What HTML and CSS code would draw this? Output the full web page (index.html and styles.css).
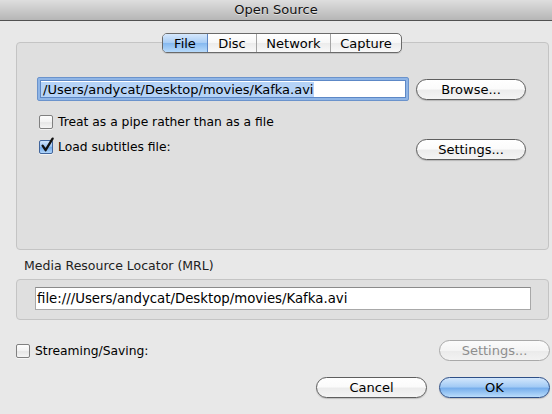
FILE: index.html
```html
<!DOCTYPE html>
<html>
<head>
<meta charset="utf-8">
<link rel="stylesheet" href="styles.css">
</head>
<body>
<div class="window">
  <div class="titlebar">Open Source</div>
  <div class="content">
    <div class="tabs">
      <span class="seg seg-file selected">File</span><span class="seg seg-disc">Disc</span><span class="seg seg-net">Network</span><span class="seg seg-cap">Capture</span>
    </div>
    <div class="tabbox">
      <div class="row row-path">
        <div class="field focused"><span class="selection">/Users/andycat/Desktop/movies/Kafka.avi</span></div>
        <div class="btn btn-browse">Browse...</div>
      </div>
      <div class="check check-pipe"><span class="cbox"></span><span>Treat as a pipe rather than as a file</span></div>
      <div class="row row-subs">
        <div class="check check-subs"><span class="cbox on"><svg class="tick" width="14" height="16" viewBox="0 0 14 16"><path d="M2.6 8.6 L5.6 13.2 L12.6 1.6" fill="none" stroke="#111" stroke-width="2.3" stroke-linecap="round" stroke-linejoin="round"/></svg></span><span>Load subtitles file:</span></div>
        <div class="btn btn-settings">Settings...</div>
      </div>
    </div>
    <div class="mrl-label">Media Resource Locator (MRL)</div>
    <div class="mrlbox">
      <div class="field plain">file:///Users/andycat/Desktop/movies/Kafka.avi</div>
    </div>
    <div class="row row-stream">
      <div class="check"><span class="cbox"></span><span>Streaming/Saving:</span></div>
      <div class="btn btn-wide disabled">Settings...</div>
    </div>
    <div class="row row-actions">
      <div class="btn btn-wide">Cancel</div>
      <div class="btn btn-wide default">OK</div>
    </div>
  </div>
</div>
</body>
</html>
```
FILE: styles.css
```css
* { box-sizing: border-box; }
html, body { margin: 0; padding: 0; }
body {
  width: 552px;
  height: 414px;
  overflow: hidden;
  background: #e8e8e8;
  font-family: "DejaVu Sans", "Liberation Sans", sans-serif;
  font-size: 12.3px;
  color: #000;
}
.window { width: 552px; height: 414px; background: #e8e8e8; }

.titlebar {
  height: 21px;
  line-height: 20px;
  text-align: center;
  font-size: 13px;
  color: #111;
  background: linear-gradient(#dedede, #b6b6b6);
  border-bottom: 1px solid #515151;
  text-shadow: 0 1px 0 rgba(255,255,255,0.5);
}

.content { padding: 0 2px 0 16px; }

/* segmented tabs */
.tabs {
  position: relative;
  z-index: 1;
  display: flex;
  width: 240px;
  height: 20px;
  margin: 12px 0 0 146px;
  border: 1px solid #6a6a6a;
  border-radius: 5px;
  overflow: hidden;
  background: linear-gradient(#ffffff 0%, #f7f7f7 50%, #ececec 52%, #f9f9f9 100%);
  box-shadow: 0 1px 0 rgba(0,0,0,0.12);
}
.seg {
  display: flex;
  align-items: center;
  justify-content: center;
  height: 100%;
  font-size: 13px;
  border-right: 1px solid #a4a4a4;
}
.seg:last-child { border-right: none; }
.seg-file { width: 45px; }
.seg-disc { width: 49px; }
.seg-net { width: 74px; }
.seg-cap { flex: 1; }
.seg.selected {
  background: linear-gradient(#d6e8fc 0%, #a9cdf5 48%, #86b9f0 52%, #b7dafb 100%);
  border-right-color: #5d86c4;
}

.tabbox {
  width: 533px;
  height: 208px;
  margin-top: -11px;
  padding: 34px 22px 0 20px;
  background: #dfdfdf;
  border: 1px solid #c4c4c4;
  border-radius: 4px;
}

.row { display: flex; align-items: center; }
.row-path { gap: 7px; }
.field {
  background: #fff;
  white-space: nowrap;
  overflow: hidden;
}
.field.focused {
  width: 372px;
  height: 24px;
  padding: 3px 0 0 5px;
  line-height: 18px;
  font-size: 13px;
  border: 1px solid #6b93cc;
  border-radius: 2px;
  box-shadow: inset 0 0 0 2px #8fb5e6, inset 0 0 0 3px #5d88c6;
}
.selection { background: #b5d3f7; margin-left: -2px; padding-left: 2px; padding-right: 1px; }

.btn {
  display: flex;
  align-items: center;
  justify-content: center;
  width: 110px;
  height: 21px;
  font-size: 13px;
  border: 1px solid #5e5e5e;
  border-radius: 11px;
  background: linear-gradient(#ffffff 0%, #fbfbfb 45%, #ececec 55%, #f4f4f4 100%);
  box-shadow: 0 1px 1px rgba(0,0,0,0.18);
}
.btn-wide { width: 111px; }
.btn.disabled {
  color: #8e8e8e;
  border-color: #a9a9a9;
  background: linear-gradient(#fbfbfb 0%, #f4f4f4 50%, #ebebeb 55%, #f2f2f2 100%);
  box-shadow: none;
}
.btn.default {
  border-color: #2e4f87;
  background: linear-gradient(#d3e7fc 0%, #a3cbf5 45%, #78afec 55%, #b9dcfb 100%);
}

.check { display: flex; align-items: center; gap: 5px; }
.cbox {
  position: relative;
  width: 14px;
  height: 14px;
  flex: none;
  border: 1px solid #808080;
  border-radius: 2px;
  background: linear-gradient(#fdfdfd 0%, #f2f2f2 50%, #e6e6e6 55%, #f5f5f5 100%);
  box-shadow: 0 1px 0 rgba(255,255,255,0.6);
}
.cbox.on {
  border-color: #41659c;
  background: linear-gradient(#cfe4fb 0%, #99c2f1 48%, #74abea 55%, #b0d5fa 100%);
}
.tick { position: absolute; left: 0; top: -4px; }

.check-pipe { margin: 14px 0 0 2px; height: 14px; }
.row-subs { margin-top: 10px; height: 21px; justify-content: space-between; }
.check-subs { margin-left: 2px; align-self: flex-start; margin-top: 1px; }

.mrl-label {
  margin: 9px 0 0 8px;
  height: 14px;
  line-height: 14px;
  font-size: 12.5px;
  color: #222;
}
.mrlbox {
  width: 533px;
  height: 41px;
  margin-top: 6px;
  padding: 7px 0 0 18px;
  background: #dfdfdf;
  border: 1px solid #c4c4c4;
  border-radius: 4px;
}
.field.plain {
  width: 496px;
  height: 23px;
  padding: 0 0 0 1px;
  line-height: 21px;
  font-size: 13.3px;
  border: 1px solid #a8a8a8;
  border-top-color: #8a8a8a;
}

.row-stream { margin-top: 20px; height: 21px; justify-content: space-between; }
.row-actions { margin-top: 16px; height: 21px; justify-content: flex-end; gap: 12px; }
```
